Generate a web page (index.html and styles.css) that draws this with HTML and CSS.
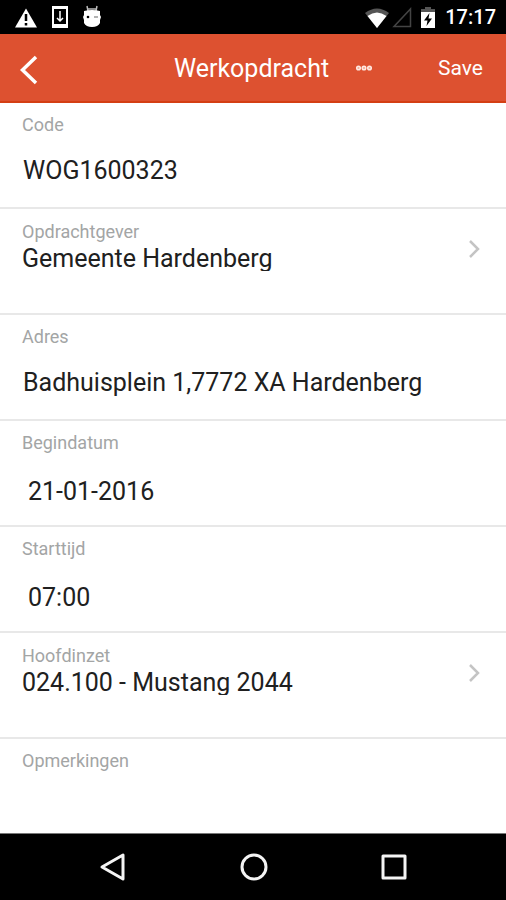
FILE: index.html
```
<!DOCTYPE html>
<html lang="nl">
<head>
<meta charset="utf-8">
<meta name="viewport" content="width=device-width, initial-scale=1">
<title>Werkopdracht</title>
<link rel="stylesheet" href="styles.css">
</head>
<body>
<div class="status">
  <div class="status-left">
    <svg width="24" height="24" viewBox="0 0 24 24"><path d="M12 3.500 23 22.500H1z" fill="#fff"/><path d="M12 9v7M12 18v2.500" stroke="#000" stroke-width="2.500"/></svg>
    <svg width="18" height="24" viewBox="0 0 18 24"><path d="M1 1h16v22H1z" fill="#fff"/><path d="M3 4h12v15H3z"/><path d="M9 6v10M6 13l3 3 3-3" fill="none" stroke="#fff" stroke-width="1.500"/></svg>
    <svg width="20" height="24" viewBox="0 0 20 24"><path d="M5 1l1 5M15 1l-1 5M6 4h8" fill="none" stroke="#bbb" stroke-width="1.500"/><path d="M2 6Q10 4 18 6V10l1 2-1 3v3q-2 4-8 4t-8-4v-3l-1-3 1-2z" fill="#fff"/><circle cx="6" cy="12" r="1.300"/><path d="M12 12h4" stroke="#888" stroke-width="1.300"/></svg>
  </div>
  <div class="status-right">
    <svg width="26" height="24" viewBox="0 0 26 24"><path d="M1 8Q13-1 25 8L13 23z" fill="#555"/><path d="M3.500 11Q13 4 22.500 11L13 23z" fill="#fff"/></svg>
    <svg class="signal" width="20" height="24" viewBox="0 0 20 24"><path d="M18.500 4v17.500H2z" fill="none" stroke="#444" stroke-width="1.500"/></svg>
    <svg class="battery" width="16" height="24" viewBox="0 0 16 24"><path d="M5 2h6v2h4v5H1V4h4z" fill="#555"/><path d="M1 7h14v16H1z" fill="#fff"/><path d="M9.500 8 4 15.500h3.500L6.500 21l5.500-7.500H8.500z"/></svg>
    <time>17:17</time>
  </div>
</div>
<header class="bar">
  <button class="back" type="button" aria-label="Terug"><svg width="20" height="32" viewBox="0 0 20 32"><path d="M18 3 4.500 16 18 29" fill="none" stroke="#fff" stroke-width="3.500"/></svg></button>
  <div class="heading">
    <h1>Werkopdracht</h1>
    <button class="more" type="button" aria-label="Meer"><svg width="18" height="8" viewBox="0 0 18 8" fill="#f5a993" stroke="#ffe9e2" stroke-width="1.500"><circle cx="3.500" cy="4" r="1.800"/><circle cx="9" cy="4" r="1.800"/><circle cx="14.500" cy="4" r="1.800"/></svg></button>
  </div>
  <button class="save" type="button">Save</button>
</header>
<main class="form">
  <div class="row">
    <label for="code">Code</label>
    <input id="code" type="text" value="WOG1600323">
  </div>
  <button class="row pick" type="button">
    <span class="pick-label">Opdrachtgever</span>
    <span class="pick-value">Gemeente Hardenberg</span>
    <svg class="chevron" width="14" height="20" viewBox="0 0 14 20"><path d="M2 2l8 8-8 8" fill="none" stroke="#c4c4c4" stroke-width="2.500"/></svg>
  </button>
  <div class="row">
    <label for="adres">Adres</label>
    <input id="adres" type="text" value="Badhuisplein 1,7772 XA Hardenberg">
  </div>
  <div class="row picker">
    <label for="datum">Begindatum</label>
    <input id="datum" type="text" value="21-01-2016">
  </div>
  <div class="row picker">
    <label for="tijd">Starttijd</label>
    <input id="tijd" type="text" value="07:00">
  </div>
  <button class="row pick" type="button">
    <span class="pick-label">Hoofdinzet</span>
    <span class="pick-value">024.100 - Mustang 2044</span>
    <svg class="chevron" width="14" height="20" viewBox="0 0 14 20"><path d="M2 2l8 8-8 8" fill="none" stroke="#c4c4c4" stroke-width="2.500"/></svg>
  </button>
  <div class="row last">
    <label for="opmerkingen">Opmerkingen</label>
    <input id="opmerkingen" type="text">
  </div>
</main>
<nav class="nav">
  <button type="button" aria-label="Vorige"><svg width="30" height="30" viewBox="0 0 30 30"><path d="M25 3v24L4 15z"/></svg></button>
  <button type="button" aria-label="Start"><svg width="30" height="30" viewBox="0 0 30 30"><circle cx="15" cy="15" r="12"/></svg></button>
  <button type="button" aria-label="Overzicht"><svg width="30" height="30" viewBox="0 0 30 30"><path d="M4 4h22v22H4z"/></svg></button>
</nav>
</body>
</html>
```
FILE: styles.css
```
* { box-sizing: border-box; }
body {
  margin: 0;
  min-height: 100vh;
  display: flex;
  flex-direction: column;
  background: #fff;
  color: #202020;
  font-family: Roboto, "Liberation Sans", sans-serif;
}
svg { display: block; flex: none; }
button, input {
  margin: 0;
  padding: 0;
  border: 0;
  background: none;
  color: inherit;
  font: inherit;
}
.status {
  display: flex;
  justify-content: space-between;
  align-items: center;
  height: 34px;
  padding: 0 10px 0 14px;
  background: #000;
  color: #fff;
}
.status-left { display: flex; gap: 13px; }
.status-right { display: flex; align-items: center; }
.signal { margin-left: 2px; }
.battery { margin: 0 9px 0 8px; }
.status time {
  font-size: 20px;
  font-weight: 500;
  line-height: 24px;
}
.bar {
  display: grid;
  grid-template-columns: 1fr auto 1fr;
  align-items: center;
  height: 69px;
  padding: 0 23px 0 18px;
  background: #dd5130;
  border-bottom: 2px solid #d43f14;
  color: #fff;
}
.back { justify-self: start; padding-top: 4px; }
.heading { display: flex; align-items: center; gap: 26px; padding-left: 46px; }
h1 {
  margin: 0;
  padding-top: 2px;
  font-size: 25px;
  font-weight: 400;
  line-height: 32px;
}
.save {
  justify-self: end;
  font-size: 21px;
  line-height: 32px;
}
.form { flex: 1; display: flex; flex-direction: column; }
.row {
  display: block;
  position: relative;
  width: 100%;
  height: 106px;
  padding: 11px 22px 0;
  border-bottom: 2px solid #e8e8e8;
  text-align: left;
}
.row label, .pick-label {
  display: block;
  color: #a3a5a5;
  font-size: 18px;
  line-height: 22px;
}
.row input {
  display: block;
  width: 100%;
  height: 44px;
  margin-top: 12px;
  padding-left: 1px;
  font-size: 25px;
  outline: 0;
}
.picker input { margin-top: 15px; padding-left: 6px; }
.pick { padding-top: 0; padding-bottom: 30px; }
.pick-value {
  display: block;
  height: 28px;
  overflow: hidden;
  font-size: 25px;
  line-height: 32px;
}
.chevron {
  position: absolute;
  right: 24px;
  top: 30px;
}
.last { flex: 1; height: auto; border: 0; }
.last input { height: 24px; }
.nav {
  display: flex;
  justify-content: space-between;
  align-items: center;
  height: 67px;
  padding: 0 97px 0 98px;
  background: #000;
  border-top: 1px solid #777;
}
.nav svg { fill: none; stroke: #f4f4f4; stroke-width: 3; stroke-linejoin: round; }
```
